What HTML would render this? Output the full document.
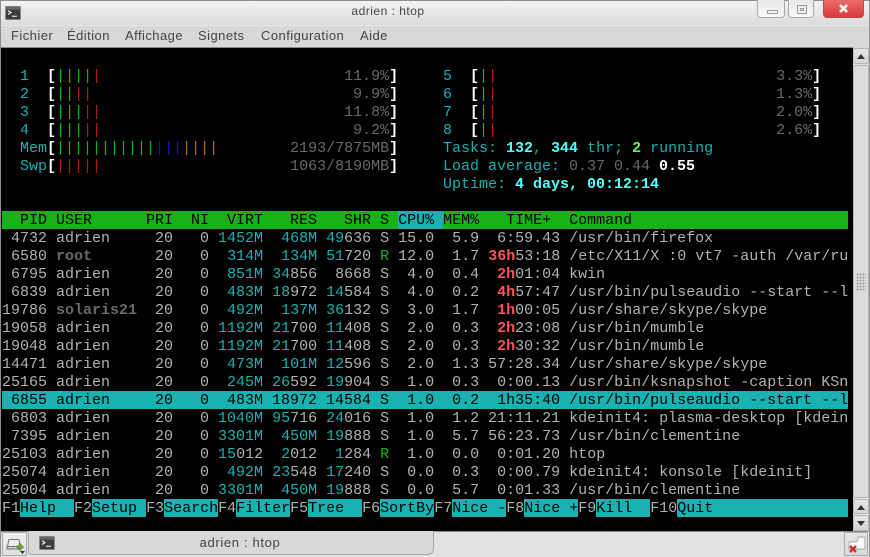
<!DOCTYPE html>
<html><head><meta charset="utf-8"><title>adrien : htop</title>
<style>
html,body{margin:0;padding:0;background:#fff}
#w{position:relative;width:870px;height:557px;overflow:hidden;background:#d8d8d8;font-family:"Liberation Sans",sans-serif}
.a{position:absolute}
#tb{left:0;top:0;width:870px;height:25px;background:linear-gradient(#f2f2f2,#dcdcdc);border-top:1px solid #8e8e8e;box-sizing:border-box}
#mb{left:0;top:25px;width:870px;height:22px;background:#d8d8d8;border-top:1px solid #e6e6e6;box-sizing:border-box}
#edgeL{left:0;top:0;width:1px;height:557px;background:#8e8e8e}
#edgeR{left:869px;top:0;width:1px;height:557px;background:#8e8e8e}
#t{left:1px;top:47px;width:852px;height:485px;background:#000;border-top:1px solid #8a8a8a;box-sizing:border-box}
.m{top:28px;font-size:13px;line-height:15px;color:#444;letter-spacing:.45px}
.r{position:absolute;left:2px;width:846px;height:18px;font:15px/20px "Liberation Mono",monospace;white-space:pre;color:#b2b2b2}
.c{color:#18b2b2}.d{color:#686868}.dd{color:#686868;font-weight:bold}.g{color:#18b218}.e{color:#b21818}.b{color:#1818b2}.y{color:#b26818}
.wb{color:#fff;font-weight:bold}.bc{color:#54ffff;font-weight:bold}.bg{color:#54ff54;font-weight:bold}.br{color:#ff5454;font-weight:bold}
.k{background:#18b2b2;color:#000}
.ib{display:inline-block;height:18px;vertical-align:top}
.f{display:inline-block;height:18px;vertical-align:top;background:#000}
.btn{top:0;height:18px;box-sizing:border-box;border:1px solid #a8a8a8;border-top:0;border-radius:0 0 4px 4px;background:linear-gradient(#e8e8e8,#fafafa)}
.sb{left:853px;width:16px;box-sizing:border-box;border:1px solid #b4b4b4;border-radius:2px;background:linear-gradient(#e6e6e6,#d6d6d6)}
.up{position:absolute;left:3px;top:5px;width:0;height:0;border-left:4.5px solid transparent;border-right:4.5px solid transparent;border-bottom:5px solid #333}
.dn{position:absolute;left:3px;top:5px;width:0;height:0;border-left:4.5px solid transparent;border-right:4.5px solid transparent;border-top:5px solid #333}
</style></head><body><div id="w">
<div class="a" id="tb"></div>
<div class="a" id="mb"></div>
<svg class="a" style="left:5px;top:6px" width="16" height="14" viewBox="0 0 16 15" preserveAspectRatio="none"><rect x=".5" y=".5" width="15" height="14" rx="1" fill="#3c3c3c" stroke="#8a8a8a"/><rect x="1" y="1" width="14" height="3" fill="#666"/><path d="M3 5l3 2-3 2M7 11h5" stroke="#fff" fill="none" stroke-width="1.1"/></svg>
<div class="a" style="left:288px;top:4px;width:200px;text-align:center;font-size:12px;line-height:15px;color:#444;letter-spacing:.5px">adrien : htop</div>
<div class="a btn" style="left:757px;width:28px"><div class="a" style="left:9px;top:10px;width:9px;height:2px;border:1px solid #999;border-radius:1px"></div></div>
<div class="a btn" style="left:788px;width:26px"><div class="a" style="left:8px;top:5px;width:8px;height:7px;border:1px solid #999;border-radius:1px"></div><div class="a" style="left:11px;top:8px;width:2px;height:1px;border:1px solid #999"></div></div>
<div class="a" style="left:823px;top:0;width:41px;height:18px;border-radius:0 0 4px 4px;background:linear-gradient(#ee6a6a,#d63c3c);border:1px solid #c04848;border-top:0;box-sizing:border-box"><svg class="a" style="left:13px;top:3px" width="13" height="11" viewBox="0 0 13 11"><path d="M3 2l7 7M10 2l-7 7" stroke="#fff" stroke-width="2.6"/></svg></div>
<div class="a m" style="left:11px">Fichier</div>
<div class="a m" style="left:67px">Édition</div>
<div class="a m" style="left:125px">Affichage</div>
<div class="a m" style="left:198px">Signets</div>
<div class="a m" style="left:261px">Configuration</div>
<div class="a m" style="left:360px">Aide</div>
<div class="a" id="t"></div>

<div class="r" style="top:67px">  <span class="c">1</span>  <span class="wb">[</span><span class="g">||||</span><span class="e">|</span>                           <span class="d">11.9%</span><span class="wb">]</span></div>
<div class="r" style="top:85px">  <span class="c">2</span>  <span class="wb">[</span><span class="g">||</span><span class="e">||</span>                             <span class="d">9.9%</span><span class="wb">]</span></div>
<div class="r" style="top:103px">  <span class="c">3</span>  <span class="wb">[</span><span class="g">|||</span><span class="e">||</span>                           <span class="d">11.8%</span><span class="wb">]</span></div>
<div class="r" style="top:121px">  <span class="c">4</span>  <span class="wb">[</span><span class="g">|||</span><span class="e">||</span>                            <span class="d">9.2%</span><span class="wb">]</span></div>
<div class="r" style="top:139px">  <span class="c">Mem</span><span class="wb">[</span><span class="g">|||||||||||</span><span class="b">|||</span><span class="y">||||</span>        <span class="d">2193/7875MB</span><span class="wb">]</span></div>
<div class="r" style="top:157px">  <span class="c">Swp</span><span class="wb">[</span><span class="e">|||||</span>                     <span class="d">1063/8190MB</span><span class="wb">]</span></div>

<div class="r" style="top:67px;left:443px;width:400px"><span class="c">5</span>  <span class="wb">[</span><span class="g">|</span><span class="e">|</span>                               <span class="d">3.3%</span><span class="wb">]</span></div>
<div class="r" style="top:85px;left:443px;width:400px"><span class="c">6</span>  <span class="wb">[</span><span class="g">|</span><span class="e">|</span>                               <span class="d">1.3%</span><span class="wb">]</span></div>
<div class="r" style="top:103px;left:443px;width:400px"><span class="c">7</span>  <span class="wb">[</span><span class="g">|</span><span class="e">|</span>                               <span class="d">2.0%</span><span class="wb">]</span></div>
<div class="r" style="top:121px;left:443px;width:400px"><span class="c">8</span>  <span class="wb">[</span><span class="g">|</span><span class="e">|</span>                               <span class="d">2.6%</span><span class="wb">]</span></div>
<div class="r" style="top:139px;left:443px;width:400px"><span class="c">Tasks: </span><span class="bc">132</span><span class="c">, </span><span class="bc">344</span><span class="c"> thr; </span><span class="bg">2</span><span class="c"> running</span></div>
<div class="r" style="top:157px;left:443px;width:400px"><span class="c">Load average: </span><span class="d">0.37 0.44 </span><span class="wb">0.55</span></div>
<div class="r" style="top:175px;left:443px;width:400px"><span class="c">Uptime: </span><span class="bc">4 days, 00:12:14</span></div>

<div class="r" style="top:211px;background:#18b218;color:#000">  PID USER      PRI  NI  VIRT   RES   SHR S <span class="k ib">CPU% </span>MEM%   TIME+  Command</div>

<div class="r" style="top:229px"> 4732 adrien     20   0 <span class="c">1452M</span>  <span class="c">468M</span> <span class="c">49</span>636 S 15.0  5.9  6:59.43 /usr/bin/firefox</div>
<div class="r" style="top:247px"> 6580 <span class="dd">root</span>       20   0  <span class="c">314M</span>  <span class="c">134M</span> <span class="c">51</span>720 <span class="g">R</span> 12.0  1.7 <span class="br">36h</span>53:18 /etc/X11/X :0 vt7 -auth /var/ru</div>
<div class="r" style="top:265px"> 6795 adrien     20   0  <span class="c">851M</span> <span class="c">34</span>856  8668 S  4.0  0.4  <span class="br">2h</span>01:04 kwin</div>
<div class="r" style="top:283px"> 6839 adrien     20   0  <span class="c">483M</span> <span class="c">18</span>972 <span class="c">14</span>584 S  4.0  0.2  <span class="br">4h</span>57:47 /usr/bin/pulseaudio --start --l</div>
<div class="r" style="top:301px">19786 <span class="dd">solaris21</span>  20   0  <span class="c">492M</span>  <span class="c">137M</span> <span class="c">36</span>132 S  3.0  1.7  <span class="br">1h</span>00:05 /usr/share/skype/skype</div>
<div class="r" style="top:319px">19058 adrien     20   0 <span class="c">1192M</span> <span class="c">21</span>700 <span class="c">11</span>408 S  2.0  0.3  <span class="br">2h</span>23:08 /usr/bin/mumble</div>
<div class="r" style="top:337px">19048 adrien     20   0 <span class="c">1192M</span> <span class="c">21</span>700 <span class="c">11</span>408 S  2.0  0.3  <span class="br">2h</span>30:32 /usr/bin/mumble</div>
<div class="r" style="top:355px">14471 adrien     20   0  <span class="c">473M</span>  <span class="c">101M</span> <span class="c">12</span>596 S  2.0  1.3 57:28.34 /usr/share/skype/skype</div>
<div class="r" style="top:373px">25165 adrien     20   0  <span class="c">245M</span> <span class="c">26</span>592 <span class="c">19</span>904 S  1.0  0.3  0:00.13 /usr/bin/ksnapshot -caption KSn</div>
<div class="r k" style="top:391px"> 6855 adrien     20   0  483M 18972 14584 S  1.0  0.2  1h35:40 /usr/bin/pulseaudio --start --l</div>
<div class="r" style="top:409px"> 6803 adrien     20   0 <span class="c">1040M</span> <span class="c">95</span>716 <span class="c">24</span>016 S  1.0  1.2 21:11.21 kdeinit4: plasma-desktop [kdein</div>
<div class="r" style="top:427px"> 7395 adrien     20   0 <span class="c">3301M</span>  <span class="c">450M</span> <span class="c">19</span>888 S  1.0  5.7 56:23.73 /usr/bin/clementine</div>
<div class="r" style="top:445px">25103 adrien     20   0 <span class="c">15</span>012  <span class="c">2</span>012  <span class="c">1</span>284 <span class="g">R</span>  1.0  0.0  0:01.20 htop</div>
<div class="r" style="top:463px">25074 adrien     20   0  <span class="c">492M</span> <span class="c">23</span>548 <span class="c">17</span>240 S  0.0  0.3  0:00.79 kdeinit4: konsole [kdeinit]</div>
<div class="r" style="top:481px">25004 adrien     20   0 <span class="c">3301M</span>  <span class="c">450M</span> <span class="c">19</span>888 S  0.0  5.7  0:01.33 /usr/bin/clementine</div>
<div class="r" style="top:499px;background:#18b2b2"><span class="f">F1</span><span class="k">Help  </span><span class="f">F2</span><span class="k">Setup </span><span class="f">F3</span><span class="k">Search</span><span class="f">F4</span><span class="k">Filter</span><span class="f">F5</span><span class="k">Tree  </span><span class="f">F6</span><span class="k">SortBy</span><span class="f">F7</span><span class="k">Nice -</span><span class="f">F8</span><span class="k">Nice +</span><span class="f">F9</span><span class="k">Kill  </span><span class="f">F10</span><span class="k">Quit</span></div>

<div class="a" style="left:853px;top:48px;width:16px;height:484px;background:#e4e4e4"></div>
<div class="a sb" style="top:48px;height:16px"><div class="up"></div></div>
<div class="a sb" style="top:65px;height:433px;background:#dcdcdc"></div>
<div class="a" style="left:856px;top:273px;width:10px;height:18px;background-image:radial-gradient(#a0a0a0 .8px,transparent 1px);background-size:3px 3px"></div>
<div class="a sb" style="top:499px;height:15px"><div class="up"></div></div>
<div class="a sb" style="top:515px;height:16px"><div class="dn"></div></div>

<div class="a" style="left:1px;top:531px;width:868px;height:26px;background:#e2e2e2;border-top:1px solid #8a8a8a;box-sizing:border-box"></div>
<div class="a" style="left:2px;top:532px;width:25px;height:24px;box-sizing:border-box;border:1px solid #aaa;border-radius:2px;background:linear-gradient(#f0f0f0,#dedede)"><svg class="a" style="left:3px;top:4px" width="19" height="17" viewBox="0 0 19 17"><path d="M1.5 9.5L3 2.5h10l1.500 7z" fill="#eee" stroke="#777"/><rect x="1" y="9.500" width="14" height="2.500" fill="#cfcfcf" stroke="#777"/><path d="M11 9h2v-2h2v2h2v2h-2v2h-2v-2h-2z" fill="#6fae3c" stroke="#4c7d28" stroke-width=".7"/><path d="M14 14h5l-2.500 3z" fill="#333"/></svg></div>
<div class="a" style="left:28px;top:531px;width:406px;height:24px;box-sizing:border-box;background:#d8d8d8;border:1px solid #a8a8a8;border-top:0;border-radius:0 0 6px 3px"></div>
<svg class="a" style="left:39px;top:536px" width="16" height="14" viewBox="0 0 16 15" preserveAspectRatio="none"><rect x=".5" y=".5" width="15" height="14" rx="1" fill="#3c3c3c" stroke="#8a8a8a"/><rect x="1" y="1" width="14" height="3" fill="#666"/><path d="M3 5l3 2-3 2M7 11h5" stroke="#fff" fill="none" stroke-width="1.1"/></svg>
<div class="a" style="left:140px;top:535px;width:200px;text-align:center;font-size:13px;line-height:15px;color:#444;letter-spacing:.65px">adrien : htop</div>
<div class="a" style="left:844px;top:532px;width:24px;height:24px;box-sizing:border-box;border:1px solid #aaa;border-radius:2px;background:linear-gradient(#e6e6e6,#d8d8d8)"><svg class="a" style="left:3px;top:2px" width="18" height="19" viewBox="0 0 18 19"><path d="M1 7h7l2-2V2h7v12H1z" fill="#fafafa" stroke="#aaa"/><path d="M2 11l6 6M8 11l-6 6" stroke="#d03030" stroke-width="2.400"/></svg></div>
<div class="a" id="edgeL"></div><div class="a" id="edgeR"></div>
</div></body></html>
